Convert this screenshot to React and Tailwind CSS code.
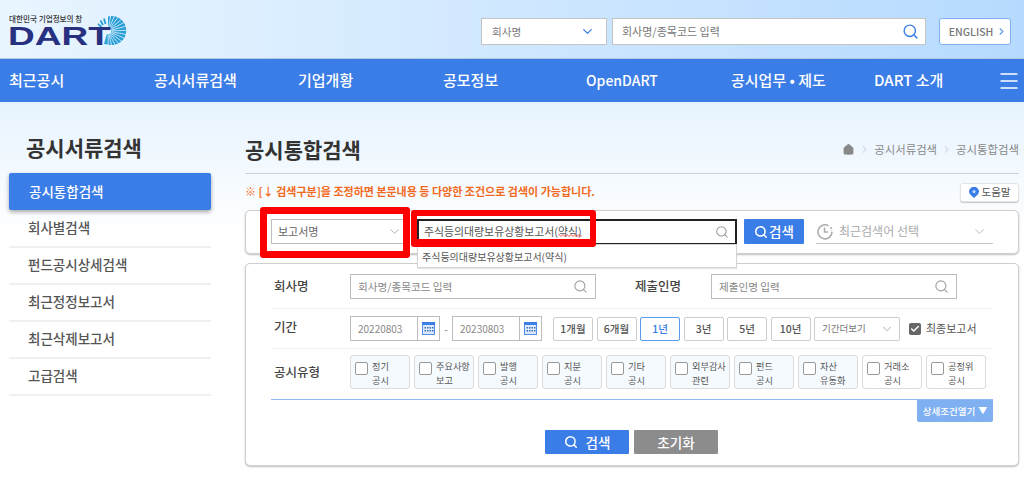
import React from "react";
import { Check, ChevronDown, ChevronRight, Home, Search, Menu } from "lucide-react";

const sideItems = ["회사별검색", "펀드공시상세검색", "최근정정보고서", "최근삭제보고서", "고급검색"];
const navItems = [
  { label: "최근공시", cls: "w-[145px] text-[15px]" },
  { label: "공시서류검색", cls: "w-[144px] text-[15px]" },
  { label: "기업개황", cls: "w-[145px] text-[15px]" },
  { label: "공모정보", cls: "w-[143px] text-[15px]" },
  { label: "OpenDART", cls: "w-[145px] text-[14px]" },
  { label: "공시업무 • 제도", cls: "w-[143px] text-[15px]" },
  { label: "DART 소개", cls: "w-[121px] text-[15px]" },
];
const periods = [
  { label: "1개월", cls: "border-[#ccc] text-[#555]" },
  { label: "6개월", cls: "border-[#ccc] text-[#555]" },
  { label: "1년", cls: "border-[#5b9bf0] text-[#3b7de6]" },
  { label: "3년", cls: "border-[#ccc] text-[#555]" },
  { label: "5년", cls: "border-[#ccc] text-[#555]" },
  { label: "10년", cls: "border-[#ccc] text-[#555]" },
];
const types = [
  ["정기", "공시"], ["주요사항", "보고"], ["발행", "공시"], ["지분", "공시"], ["기타", "공시"],
  ["외부감사", "관련"], ["펀드", "공시"], ["자산", "유동화"], ["거래소", "공시"], ["공정위", "공시"],
];

// radial sun mark next to the logo text
const Sun = () => (
  <svg width="32" height="32" viewBox="0 0 32 32" className="absolute left-[96px] top-[15px]">
    <path d="M12 29.5 A14.5 14.5 0 1 0 12 1.5 L12 15 L8 29 Z" fill="#2b9fd8" />
    <g stroke="#e4f2fd" strokeWidth="0.8">
      {Array.from({ length: 14 }).map((_, i) => {
        const a = (-80 + i * 13) * (Math.PI / 180);
        return (
          <line key={i} x1={12 + 4 * Math.cos(a)} y1={16 + 4 * Math.sin(a)} x2={12 + 22 * Math.cos(a)} y2={16 + 22 * Math.sin(a)} />
        );
      })}
    </g>
    {/* broken rays, upper left */}
    <g stroke="#2b9fd8" strokeWidth="1.8">
      <line x1="9.5" y1="9" x2="8" y2="3.5" />
      <line x1="7" y1="10" x2="4.5" y2="5.5" />
      <line x1="5.5" y1="12" x2="2" y2="9" />
    </g>
    <circle cx="12" cy="16" r="3.5" fill="#e4f2fd" />
  </svg>
);

const Calendar = () => (
  <svg width="13" height="13" viewBox="0 0 13 13">
    <rect x="0.5" y="0.5" width="12" height="12" fill="#dce9fb" stroke="#4f8fe8" />
    <rect x="0" y="0" width="13" height="3" fill="#3b7de6" />
    <g fill="#3b6fb8">
      <rect x="2.5" y="5" width="1.5" height="1.5" /><rect x="5" y="5" width="1.5" height="1.5" /><rect x="7.5" y="5" width="1.5" height="1.5" /><rect x="10" y="5" width="1.5" height="1.5" />
      <rect x="2.5" y="8" width="1.5" height="1.5" /><rect x="5" y="8" width="1.5" height="1.5" /><rect x="7.5" y="8" width="1.5" height="1.5" /><rect x="10" y="8" width="1.5" height="1.5" />
    </g>
  </svg>
);

const Field = ({ text }) => (
  <div className="w-[246px] h-[25px] border border-[#bdbdbd] bg-white flex items-center justify-between pl-[7px] pr-[7px] text-[10.6px] text-[#888]">
    <span>{text}</span>
    <Search size={15} strokeWidth={1.8} className="text-[#a0a0a0]" />
  </div>
);

const DateField = ({ value }) => (
  <div className="w-[90px] h-[25px] border border-[#bdbdbd] bg-white flex items-center text-[#888] text-[10px]">
    <span className="w-[66px] pl-[7px]">{value}</span>
    <div className="flex-1 h-full border-l border-[#bdbdbd] flex items-center justify-center">
      <Calendar />
    </div>
  </div>
);

const App = () => {
  return (
    <div
      className="relative w-[1024px] h-[479px] overflow-hidden bg-white text-[#444]"
      style={{ fontFamily: '"Noto Sans CJK KR", "Noto Sans", sans-serif' }}
    >
      {/* top header */}
      <header className="relative h-[59px] bg-gradient-to-r from-[#e9f5ff] to-[#b6daff] border-b border-[#b3c8e0] flex items-center justify-end pr-[13px]">
        <div className="absolute left-[9px] top-[14px] text-[7.6px] leading-[10px] text-[#333] font-medium">대한민국 기업정보의 창</div>
        <Sun />
        <div className="absolute left-[8px] top-[25px] text-[25px] leading-[22px] font-bold text-[#27317f] scale-x-[1.48] origin-left font-['Liberation_Sans']">DART</div>
        <div className="w-[126px] h-[27px] bg-white border border-[#c4c4c4] flex items-center justify-between pl-[10px] pr-[11px] text-[10.6px] text-[#777] mr-[5px] mt-[5px]">
          <span>회사명</span>
          <ChevronDown size={15} className="text-[#3b7de6]" />
        </div>
        <div className="w-[314px] h-[27px] bg-white border border-[#c4c4c4] flex items-center justify-between pl-[9px] pr-[6px] text-[11px] text-[#777] mr-[13px] mt-[5px]">
          <span>회사명/종목코드 입력</span>
          <Search size={17} strokeWidth={2} className="text-[#3b7de6]" />
        </div>
        <div className="w-[72px] h-[27px] bg-white border border-[#7fb0f2] rounded-[3px] flex items-center justify-center gap-[3px] pl-[6px] text-[10.5px] font-medium text-[#777] mt-[5px]">
          <span>ENGLISH</span>
          <ChevronRight size={11} strokeWidth={2.4} className="text-[#5b9bf0]" />
        </div>
      </header>

      {/* main nav */}
      <nav className="h-[43px] bg-[#3b7de6] flex items-center pl-[9px] text-white font-medium">
        {navItems.map((item) => (
          <div key={item.label} className={item.cls}>{item.label}</div>
        ))}
        <Menu size={24} strokeWidth={1.4} className="ml-[2px]" />
      </nav>

      <div className="h-[377px] bg-gradient-to-b from-[#e6f3fe] to-white to-[35%] flex">
        {/* sidebar */}
        <aside className="w-[202px] ml-[9px] shrink-0">
          <h2 className="pl-[17px] pt-[30px] h-[71px] text-[21px] leading-[30px] font-bold text-[#333]">공시서류검색</h2>
          <div className="h-[37px] mb-px bg-[#3b7de6] rounded-[2px] shadow-[0_2px_4px_rgba(0,0,0,0.35)] text-white text-[13.5px] font-medium flex items-center pl-[20px]">공시통합검색</div>
          {sideItems.map((s) => (
            <div key={s} className="h-[37px] pb-[3px] border-b-2 border-[#f0f0f0] text-[13.5px] font-medium text-[#555] flex items-center pl-[19px]">{s}</div>
          ))}
        </aside>

        {/* content */}
        <main className="w-[774px] ml-[34px]">
          <div className="h-[72px] border-b border-[#cfcfcf] flex items-end justify-between pb-[9px]">
            <h1 className="text-[21px] leading-[30px] font-bold text-[#333]">공시통합검색</h1>
            <div className="flex items-center gap-[4px] text-[11.4px] text-[#888] pb-[6px]">
              <Home size={13} fill="#888" strokeWidth={0} />
              <ChevronRight size={11} strokeWidth={1.4} className="text-[#aaa]" />
              <span>공시서류검색</span>
              <ChevronRight size={11} strokeWidth={1.4} className="text-[#aaa]" />
              <span>공시통합검색</span>
            </div>
          </div>

          <div className="h-[36px] flex items-center justify-between">
            <p className="text-[11px] font-bold text-[#f26a21] mb-[2px]">※ [↓ 검색구분]을 조정하면 본문내용 등 다양한 조건으로 검색이 가능합니다.</p>
            <div className="w-[59px] h-[19px] bg-white rounded-[3px] border border-[#e4e4e4] shadow-[0_1px_1px_rgba(0,0,0,0.2)] flex items-center justify-center gap-[3px] text-[10.5px] text-[#555]">
              <svg width="10" height="11" viewBox="0 0 10 11">
                <path d="M5 11 L1.2 7.5 A4.8 4.8 0 1 1 8.8 7.5 Z" fill="#3b7de6" />
                <circle cx="5" cy="4.6" r="1.6" fill="#bcd6fa" />
              </svg>
              <span>도움말</span>
            </div>
          </div>

          {/* search bar */}
          <div className="relative h-[44px] bg-white border border-[#cfcfcf] rounded-[5px] shadow-[0_1px_2px_rgba(0,0,0,0.25)] flex items-start pt-[8px] pl-[25px]">
            <div className="w-[134px] h-[25px] border border-[#bdbdbd] flex items-center justify-between pl-[6px] pr-[2px] text-[11px] text-[#666]">
              <span>보고서명</span>
              <ChevronDown size={15} strokeWidth={1.2} className="text-[#999]" />
            </div>
            <div className="w-[320px] h-[26px] ml-[12px] border-2 border-[#222] flex items-center justify-between pl-[5px] pr-[6px] text-[10.9px] text-[#555]">
              <span className="-mt-[2px]">
                주식등의대량보유상황보고서(
                <span className="relative">
                  약식
                  <svg width="24" height="3" viewBox="0 0 24 3" className="absolute left-0 top-[11px]" fill="none" stroke="#e33" strokeWidth="0.9">
                    <path d="M0 1.5q1-2 2 0t2 0 2 0 2 0 2 0 2 0 2 0 2 0 2 0 2 0 2 0 2 0" />
                  </svg>
                </span>
                )
              </span>
              <Search size={14} strokeWidth={1.8} className="text-[#999]" />
            </div>
            <div className="w-[60px] h-[25px] ml-[7px] bg-[#3b7de6] rounded-[1px] flex items-center justify-center gap-[1px] text-white text-[13.5px] font-medium">
              <Search size={14} strokeWidth={2.6} />
              <span>검색</span>
            </div>
            <div className="w-[177px] h-[25px] ml-[12px] border-b border-[#c4c4c4] flex items-center justify-between pr-[6px] text-[12px] text-[#aaa]">
              <span className="flex items-center gap-[6px]">
                <svg width="17" height="17" viewBox="0 0 17 17" fill="none" stroke="#aaa" strokeWidth="1.5">
                  <path d="M12.5 2.8a7 7 0 1 0 3.5 6" />
                  <path d="M8.5 4.5v4.5h3.5" />
                  <path d="M14 5h2M15.5 7v.5" />
                </svg>
                최근검색어 선택
              </span>
              <ChevronDown size={15} strokeWidth={1.2} />
            </div>
            {/* autocomplete list */}
            <div className="absolute left-[171px] top-[33px] w-[320px] h-[24px] bg-white border border-[#d4d4d4] z-10 flex items-center pl-[4px] text-[10px] text-[#555] shadow-[0_1px_1px_rgba(0,0,0,0.1)]">
              주식등의대량보유상황보고서(약식)
            </div>
          </div>

          {/* form card */}
          <div className="relative mt-[9px] h-[203px] bg-white border border-[#cfcfcf] rounded-[5px] shadow-[0_1px_2px_rgba(0,0,0,0.25)] px-[25px]">
            <div className="h-[45px] border-b border-[#eee] flex items-center pt-[1px]">
              <span className="w-[79px] pl-[3px] text-[12.5px] font-medium text-[#444]">회사명</span>
              <Field text="회사명/종목코드 입력" />
              <span className="w-[76px] ml-[39px] text-[12.5px] font-medium text-[#444]">제출인명</span>
              <Field text="제출인명 입력" />
            </div>
            <div className="h-[40px] border-b border-[#eee] flex items-center">
              <span className="w-[79px] pl-[3px] text-[12.5px] font-medium text-[#444] mb-[3px]">기간</span>
              <DateField value="20220803" />
              <span className="w-[12px] text-center text-[10px] text-[#777]">-</span>
              <DateField value="20230803" />
              <div className="ml-[11px] flex gap-[3.5px]">
                {periods.map((p) => (
                  <div key={p.label} className={`w-[40px] h-[24px] border rounded-[2px] flex items-center justify-center text-[10.5px] font-medium ${p.cls}`}>{p.label}</div>
                ))}
              </div>
              <div className="ml-[3.5px] w-[86px] h-[24px] border border-[#ccc] rounded-[2px] flex items-center justify-between pl-[7px] pr-[5px] text-[9.5px] text-[#777]">
                <span>기간더보기</span>
                <ChevronDown size={14} strokeWidth={1.2} className="text-[#888]" />
              </div>
              <span className="ml-[9px] w-[12px] h-[12px] rounded-[2px] bg-[#666] flex items-center justify-center text-white">
                <Check size={10} strokeWidth={3.5} />
              </span>
              <span className="ml-[5px] text-[11px] text-[#555]">최종보고서</span>
            </div>
            <div className="h-[50px] flex items-start pt-[6px]">
              <span className="w-[79px] pl-[3px] mt-[8px] text-[12.5px] font-medium text-[#444]">공시유형</span>
              <div className="flex gap-[4px]">
                {types.map((t, i) => (
                  <div key={t[0]} className={`w-[60px] h-[34px] border border-[#dcdcdc] rounded-[3px] flex items-start pl-[4px] pt-[3px] ${i < 8 ? "bg-[#f5fafe]" : "bg-white"}`}>
                    <span className="w-[13px] h-[13px] mt-[3px] shrink-0 bg-white border border-[#999] rounded-[2px]" />
                    <span className="ml-[4px] text-[9.2px] leading-[14px] text-[#555] whitespace-nowrap">{t[0]}<br />{t[1]}</span>
                  </div>
                ))}
              </div>
            </div>
            <div className="flex justify-end border-t border-t-[#8fbaf5]">
              <div className="w-[76px] h-[22px] bg-[#7fb0f2] rounded-b-[2px] flex items-center justify-center gap-[3px] text-white text-[9.5px] font-medium">
                <span>상세조건열기</span>
                <span className="text-[9px]">▼</span>
              </div>
            </div>
            <div className="mt-[8px] ml-[274px] flex gap-[5px]">
              <div className="w-[84px] h-[24px] bg-[#3b7de6] rounded-[1px] flex items-center justify-center gap-[8px] text-white text-[13.5px] font-medium">
                <Search size={14} strokeWidth={2.6} />
                <span>검색</span>
              </div>
              <div className="w-[84px] h-[24px] bg-[#8c8c8c] rounded-[1px] flex items-center justify-center text-white text-[13.5px] font-medium">초기화</div>
            </div>
          </div>
        </main>
      </div>

      {/* red annotation boxes */}
      <div className="absolute left-[260px] top-[207px] w-[150px] h-[51px] border-[7px] border-[#ff0000] rounded-[3px] z-20" />
      <div className="absolute left-[411px] top-[210px] w-[185px] h-[37px] border-[6px] border-b-[8px] border-[#ff0000] rounded-[3px] z-20" />
    </div>
  );
};

export default App;
